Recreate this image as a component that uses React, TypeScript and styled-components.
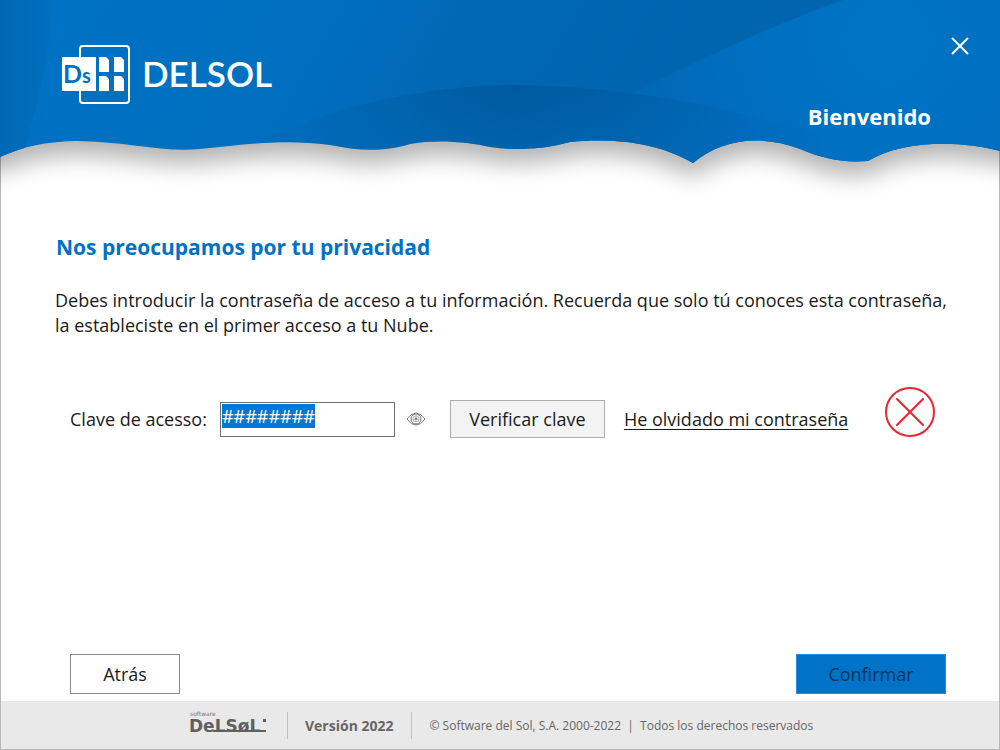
import React, { useEffect, useRef } from "react";
import styled, { createGlobalStyle } from "styled-components";

const GlobalStyle = createGlobalStyle`
  * { box-sizing: border-box; }
  body { margin: 0; background: #fff; }
`;

const Window = styled.div`
  display: flex;
  flex-direction: column;
  min-height: 100vh;
  border: 1px solid #b9b9b9;
  border-top: 0;
  background: #fff;
  color: #1a1a1a;
  font: 18px/25px "Open Sans", "Noto Sans", sans-serif;
`;

const Header = styled.header`
  position: relative;
  height: 210px;
  margin: 0 -1px;
  overflow: hidden;
`;

const Backdrop = styled.svg`
  position: absolute;
  inset: 0;
  width: 100%;
  height: 210px;
`;

const HeaderBar = styled.div`
  position: relative;
  display: flex;
  justify-content: space-between;
  align-items: flex-start;
  padding: 34px 28px 0 61px;
`;

const Brand = styled.div`
  display: flex;
  align-items: center;
  gap: 11px;
  padding-top: 10px;
`;

const BrandName = styled.span`
  color: #fff;
  font: 600 35px/58px Lato, sans-serif;
  height: 60px;
`;

const HeaderSide = styled.div`
  display: flex;
  flex-direction: column;
  align-items: flex-end;
  gap: 42px;
`;

const CloseButton = styled.button`
  display: grid;
  place-items: center;
  width: 24px;
  height: 24px;
  padding: 0;
  border: 0;
  background: none;
`;

const Welcome = styled.h1`
  margin: 0;
  padding-right: 41px;
  color: #fff;
  font-size: 22px;
  line-height: 32px;
`;

const Main = styled.main`
  flex: 1;
  display: flex;
  flex-direction: column;
  padding: 24px 40px 7px 54px;
`;

const Title = styled.h2`
  margin: 0 0 28px;
  padding-left: 1px;
  color: #0072c6;
  font-size: 21px;
  line-height: 26px;
`;

const Message = styled.p`
  margin: 0;
`;

const KeyRow = styled.form`
  display: flex;
  align-items: center;
  padding: 0 24px 0 15px;
  margin-top: 62px;
`;

const KeyLabel = styled.label`
  margin-right: 13px;
  white-space: nowrap;
`;

const KeyInput = styled.input`
  width: 175px;
  height: 35px;
  padding: 0 1px 6px;
  border: 1px solid #6e6e6e;
  outline: 0;
  background: #fff;
  color: #111;
  font: inherit;
  &::selection { background: #0078d7; color: #fff; }
`;

const EyeButton = styled.button`
  display: grid;
  place-items: center;
  width: 22px;
  height: 22px;
  margin: 0 23px 0 10px;
  padding: 0;
  border: 0;
  background: none;
`;

const Button = styled.button<{ $kind: "plain" | "soft" | "primary" }>`
  width: ${(p) => ({ plain: 110, soft: 155, primary: 150 })[p.$kind]}px;
  height: ${(p) => (p.$kind === "soft" ? 38 : 40)}px;
  padding: 0;
  border: 1px solid ${(p) => ({ plain: "#8a8a8a", soft: "#adadad", primary: "#2b8bd6" })[p.$kind]};
  background: ${(p) => ({ plain: "#fff", soft: "#f3f3f3", primary: "#0073c8" })[p.$kind]};
  color: ${(p) => (p.$kind === "primary" ? "#0b3558" : "#1a1a1a")};
  font: inherit;
  white-space: nowrap;
`;

const ForgotLink = styled.a`
  margin-left: 19px;
  color: #1a1a1a;
  text-underline-offset: 3px;
  text-decoration-skip-ink: none;
  white-space: nowrap;
`;

const StatusIcon = styled.svg`
  flex: none;
  margin: -15px 0 0 auto;
`;

const Actions = styled.div`
  display: flex;
  justify-content: space-between;
  margin-top: auto;
  padding: 0 13px 0 15px;
`;

const Footer = styled.footer`
  display: flex;
  align-items: center;
  height: 48px;
  padding-left: 188px;
  background: #e9e9e9;
  color: #666;
  white-space: nowrap;
`;

const Divider = styled.span`
  width: 1px;
  height: 27px;
  margin: 0 17px 0 18px;
  background: #bdbdbd;
`;

const Version = styled.strong`
  font-size: 14px;
`;

const Legal = styled.small`
  font-size: 12px;
`;

function HeaderBackdrop() {
  const wave =
    "M0 0H1000V151C962 141 905 139 868 161C840 163 822 158 800 149C760 134 722 139 693 163C655 141 610 138 570 142C545 149 517 151 490 147C470 142 435 139 410 144C380 153 355 150 330 145C285 139 250 144 200 149C165 153 125 141 75 141C45 142 25 146 0 157Z";
  return (
    <Backdrop viewBox="0 0 1000 210" preserveAspectRatio="none" aria-hidden="true">
      <defs>
        <linearGradient id="sky" x1="0" y1="0" x2="1" y2=".1">
          <stop offset="0" stopColor="#0073c4" />
          <stop offset=".33" stopColor="#006fc0" />
          <stop offset=".52" stopColor="#0067b2" />
          <stop offset="1" stopColor="#0062ac" />
        </linearGradient>
        <radialGradient id="glow" gradientUnits="userSpaceOnUse" cx="888" cy="40" r="280">
          <stop offset="0" stopColor="#0074c6" />
          <stop offset=".5" stopColor="#006fc0" />
          <stop offset="1" stopColor="#0067b3" />
        </radialGradient>
        <linearGradient id="hill" x1="0" y1="0" x2="1" y2="0">
          <stop offset="0" stopColor="#005ca4" stopOpacity="0" />
          <stop offset=".2" stopColor="#005ca4" stopOpacity=".3" />
          <stop offset=".5" stopColor="#005699" stopOpacity=".8" />
          <stop offset=".75" stopColor="#005ca4" stopOpacity=".5" />
          <stop offset="1" stopColor="#005ca4" stopOpacity="0" />
        </linearGradient>
        <linearGradient id="fade" x1="0" y1="0" x2="0" y2="1">
          <stop offset="0" stopColor="#fff" />
          <stop offset="1" stopColor="#fff" stopOpacity=".1" />
        </linearGradient>
        <mask id="hillMask"><path d="M210 165Q360 85 515 85Q660 86 820 135V165Z" fill="url(#fade)" /></mask>
        <linearGradient id="edge" x1="0" y1="0" x2="1" y2="0">
          <stop offset="0" stopColor="#0069b5" />
          <stop offset="1" stopColor="#006fbe" />
        </linearGradient>
        <clipPath id="waveClip"><path d={wave} /></clipPath>
        <filter id="waveShadow" x="-10%" y="-10%" width="120%" height="150%">
          <feGaussianBlur stdDeviation="12" />
        </filter>
      </defs>
      <g transform="translate(0 14)" opacity=".3" filter="url(#waveShadow)">
        <path d={wave} />
        <path d="M-60 0H0V157H-60ZM1000 0H1060V151H1000Z" />
      </g>
      <g clipPath="url(#waveClip)">
        <rect width="1000" height="170" fill="url(#sky)" />
        <path d="M0 0H52C51 50 40 100 18 170H0Z" fill="url(#edge)" />
        <path d="M843 0Q740 36 560 130L500 170H1000V0Z" fill="url(#glow)" />
        <rect x="210" y="80" width="610" height="90" fill="url(#hill)" mask="url(#hillMask)" />
      </g>
    </Backdrop>
  );
}

function BrandMark() {
  return (
    <svg width="70" height="60" viewBox="0 0 70 60" aria-hidden="true">
      <rect x="19" y="2" width="49" height="57" rx="3" fill="none" stroke="#fff" strokeWidth="2" />
      <rect x="1" y="13" width="36" height="34" fill="#0070c0" />
      <rect x="1" y="13" width="34" height="34" fill="#fff" />
      <path d="M38 13h7l3 3v12H38zM53 13h7l3 3v12H53zM38 32h7l3 3v12H38zM53 32h7l3 3v12H53z" fill="#fff" />
      <text x="2" y="39" fill="#0070c0" fontFamily="Lato, sans-serif" fontWeight="700" fontSize="25">D</text>
      <text x="21" y="39" fill="#0070c0" fontFamily="Lato, sans-serif" fontWeight="700" fontSize="20">s</text>
    </svg>
  );
}

function FooterLogo() {
  return (
    <svg width="80" height="30" viewBox="0 0 80 30" role="img" aria-label="Software Delsol">
      <text x="1" y="6" fill="#777" fontFamily="DejaVu Sans, sans-serif" fontSize="6">software</text>
      <text x="0" y="22" fill="#606060" fontFamily="DejaVu Sans, sans-serif" fontWeight="700" fontSize="17">DeLSøL</text>
      <path d="M24 21H77" fill="none" stroke="#606060" strokeWidth="2" />
      <rect x="74" y="9" width="3" height="3" fill="#606060" />
    </svg>
  );
}

export default function App() {
  const keyRef = useRef<HTMLInputElement>(null);
  useEffect(() => {
    keyRef.current?.focus();
    keyRef.current?.select();
  }, []);

  return (
    <>
      <GlobalStyle />
      <Window>
        <Header>
          <HeaderBackdrop />
          <HeaderBar>
            <Brand>
              <BrandMark />
              <BrandName>DELSOL</BrandName>
            </Brand>
            <HeaderSide>
              <CloseButton type="button" aria-label="Cerrar">
                <svg width="18" height="18" viewBox="0 0 18 18" fill="none" stroke="#fff" strokeWidth="2">
                  <path d="M1 1L17 17M17 1L1 17" />
                </svg>
              </CloseButton>
              <Welcome>Bienvenido</Welcome>
            </HeaderSide>
          </HeaderBar>
        </Header>
        <Main>
          <Title>Nos preocupamos por tu privacidad</Title>
          <Message>
            Debes introducir la contraseña de acceso a tu información. Recuerda que solo tú conoces esta contraseña,
            la estableciste en el primer acceso a tu Nube.
          </Message>
          <KeyRow onSubmit={(e) => e.preventDefault()}>
            <KeyLabel htmlFor="key">Clave de acesso:</KeyLabel>
            <KeyInput id="key" ref={keyRef} defaultValue="########" />
            <EyeButton type="button" aria-label="Mostrar clave">
              <svg width="20" height="14" viewBox="0 0 20 14" fill="none" stroke="#777" strokeWidth="1">
                <path d="M1 7Q5 1 10 1T19 7Q15 13 10 13T1 7Z" />
                <circle cx="10" cy="7" r="5" />
                <circle cx="10" cy="7" r="3" stroke="#aaa" />
                <circle cx="10" cy="7" r="1" fill="#555" />
              </svg>
            </EyeButton>
            <Button $kind="soft" type="submit">Verificar clave</Button>
            <ForgotLink href="#recuperar">He olvidado mi contraseña</ForgotLink>
            <StatusIcon width="50" height="50" viewBox="0 0 50 50" fill="none" stroke="#ec2330" strokeWidth="2" strokeLinecap="round" role="img" aria-label="Clave incorrecta">
              <circle cx="25" cy="25" r="24" />
              <path d="M12 12L38 38M38 12L12 38" />
            </StatusIcon>
          </KeyRow>
          <Actions>
            <Button $kind="plain" type="button">Atrás</Button>
            <Button $kind="primary" type="button" disabled>Confirmar</Button>
          </Actions>
        </Main>
        <Footer>
          <FooterLogo />
          <Divider />
          <Version>Versión 2022</Version>
          <Divider />
          <Legal>© Software del Sol, S.A. 2000-2022&nbsp; |&nbsp; Todos los derechos reservados</Legal>
        </Footer>
      </Window>
    </>
  );
}
